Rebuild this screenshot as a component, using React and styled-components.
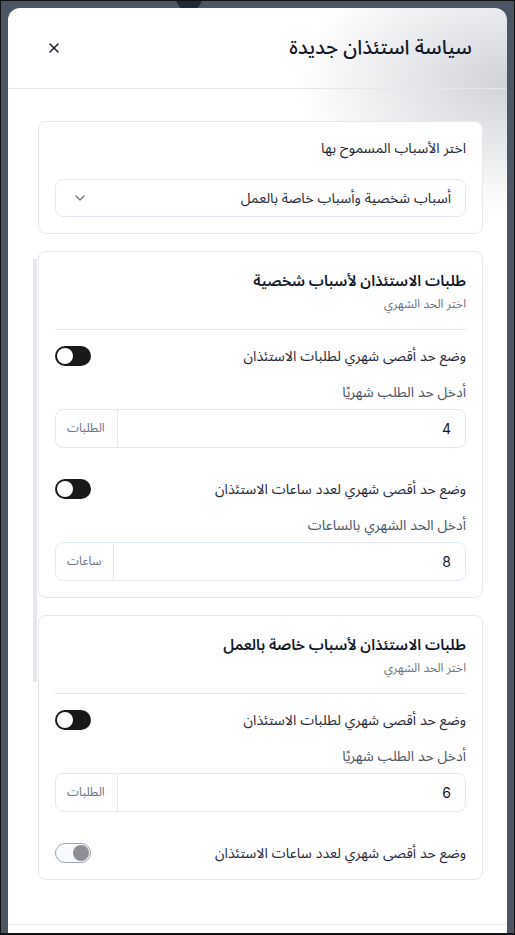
import React from "react";
import styled, { createGlobalStyle } from "styled-components";
import { ChevronDown, X } from "lucide-react";

const GlobalStyle = createGlobalStyle`
  html, body {
    margin: 0;
    padding: 0;
    background: #000;
  }
  body {
    font-family: Inter, "Noto Sans Arabic", "DejaVu Sans", sans-serif;
  }
  * {
    box-sizing: border-box;
  }
`;

const Page = styled.div`
  position: relative;
  width: 515px;
  height: 935px;
  border: 1px solid #111;
  border-bottom-width: 2px;
  background: #4b5563;
  padding: 7px 7px 0 7px;
  display: flex;
  overflow: hidden;
`;

const Backdrop = styled.div`
  position: absolute;
  top: -16px;
  left: 175px;
  width: 26px;
  height: 26px;
  border-radius: 50%;
  background: #1e293b;
`;

const Modal = styled.div`
  position: relative;
  flex: 1;
  direction: rtl;
  display: flex;
  flex-direction: column;
  border-radius: 12px 12px 0 0;
  background:
    radial-gradient(ellipse 210px 130px at 100% 8%, rgba(200, 203, 209, 0.85), rgba(255, 255, 255, 0) 100%),
    #fff;
  overflow: hidden;
`;

const Header = styled.div`
  height: 81px;
  display: flex;
  align-items: center;
  justify-content: space-between;
  padding: 0 35px 0 38px;
  border-bottom: 1px solid #e5e7eb;
`;

const Title = styled.h2`
  margin: 0;
  font-size: 20px;
  font-weight: 500;
  color: #111827;
`;

const CloseButton = styled.button`
  border: none;
  background: none;
  padding: 0;
  display: flex;
  color: #111827;
  cursor: pointer;
`;

const Body = styled.div`
  position: relative;
  flex: 1;
  display: flex;
  flex-direction: column;
  gap: 17px;
  padding: 32px 24px 0 30px;
`;

const ScrollThumb = styled.div`
  position: absolute;
  left: 25px;
  top: 170px;
  width: 4px;
  height: 423px;
  background: #e5e7eb;
`;

const Card = styled.div`
  border: 1px solid #e5e7eb;
  border-radius: 8px;
  padding: 16px;
  display: flex;
  flex-direction: column;
  background: #fff;
`;

const FieldLabel = styled.div`
  font-size: 14px;
  line-height: 20px;
  color: ${({ muted }) => (muted ? "#4b5563" : "#1f2937")};
`;

const Select = styled.div`
  margin-top: 21px;
  height: 38px;
  border: 1px solid #e2e8f0;
  border-radius: 8px;
  display: flex;
  align-items: center;
  justify-content: space-between;
  padding: 0 14px 0 16px;
  font-size: 14px;
  color: #1f2937;
`;

const SectionTitle = styled.h3`
  margin: 1px 0 0;
  font-size: 15px;
  line-height: 24px;
  font-weight: 600;
  color: #111827;
`;

const SectionHint = styled.div`
  font-size: 12px;
  line-height: 18px;
  color: #6b7280;
  margin-top: 2px;
`;

const Divider = styled.hr`
  border: none;
  border-top: 1px solid #e5e7eb;
  margin: 16px 0 16px;
`;

const ToggleRow = styled.div`
  display: flex;
  align-items: center;
  justify-content: space-between;
  margin-top: ${({ spaced }) => (spaced ? "31px" : "0")};
`;

const Switch = styled.span`
  position: relative;
  width: 36px;
  height: 20px;
  border-radius: 10px;
  background: ${({ disabled }) => (disabled ? "#f9fafb" : "#18181b")};
  border: ${({ disabled }) => (disabled ? "1px solid #9ca3af" : "none")};
  flex-shrink: 0;

  &::after {
    content: "";
    position: absolute;
    top: ${({ disabled }) => (disabled ? "1px" : "2px")};
    left: ${({ disabled }) => (disabled ? "auto" : "2px")};
    right: ${({ disabled }) => (disabled ? "1px" : "auto")};
    width: 16px;
    height: 16px;
    border-radius: 50%;
    background: ${({ disabled }) => (disabled ? "#8e8e99" : "#fff")};
  }
`;

const Field = styled.div`
  margin-top: 16px;
  display: flex;
  flex-direction: column;
  gap: 7px;
`;

const InputGroup = styled.div`
  height: 39px;
  border: 1px solid #e2e8f0;
  border-radius: 8px;
  display: flex;
  align-items: stretch;
`;

const InputValue = styled.div`
  flex: 1;
  display: flex;
  align-items: center;
  padding: 0 14px;
  font-size: 14px;
  color: #111827;
`;

const Addon = styled.div`
  display: flex;
  align-items: center;
  padding: 0 12px 0 11px;
  border-right: 1px solid #e2e8f0;
  font-size: 12px;
  color: #6b7280;
`;

const Footer = styled.div`
  height: 9px;
  border-top: 1px solid #e5e7eb;
`;

const LimitField = ({ label, value, unit }) => (
  <Field>
    <FieldLabel muted>{label}</FieldLabel>
    <InputGroup>
      <InputValue>{value}</InputValue>
      <Addon>{unit}</Addon>
    </InputGroup>
  </Field>
);

const Section = ({ title, requests, hours }) => (
  <Card>
    <SectionTitle>{title}</SectionTitle>
    <SectionHint>اختر الحد الشهري</SectionHint>
    <Divider />
    <ToggleRow>
      <FieldLabel>وضع حد أقصى شهري لطلبات الاستئذان</FieldLabel>
      <Switch />
    </ToggleRow>
    <LimitField label="أدخل حد الطلب شهريًا" value={requests} unit="الطلبات" />
    <ToggleRow spaced>
      <FieldLabel>وضع حد أقصى شهري لعدد ساعات الاستئذان</FieldLabel>
      <Switch disabled={!hours} />
    </ToggleRow>
    {hours && <LimitField label="أدخل الحد الشهري بالساعات" value={hours} unit="ساعات" />}
  </Card>
);

export default function App() {
  return (
    <>
      <GlobalStyle />
      <Page>
        <Backdrop />
        <Modal>
          <Header>
            <Title>سياسة استئذان جديدة</Title>
            <CloseButton>
              <X size={16} strokeWidth={2} />
            </CloseButton>
          </Header>
          <Body>
            <ScrollThumb />
            <Card>
              <FieldLabel>اختر الأسباب المسموح بها</FieldLabel>
              <Select>
                <span>أسباب شخصية وأسباب خاصة بالعمل</span>
                <ChevronDown size={16} color="#6b7280" />
              </Select>
            </Card>
            <Section title="طلبات الاستئذان لأسباب شخصية" requests="4" hours="8" />
            <Section title="طلبات الاستئذان لأسباب خاصة بالعمل" requests="6" />
          </Body>
          <Footer />
        </Modal>
      </Page>
    </>
  );
}
